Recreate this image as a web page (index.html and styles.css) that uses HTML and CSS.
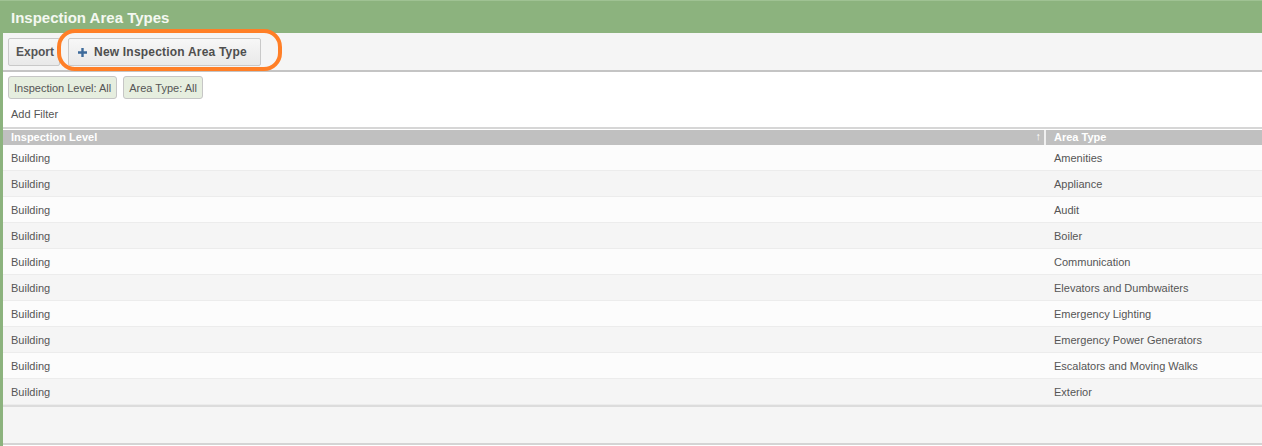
FILE: index.html
```html
<!DOCTYPE html>
<html>
<head>
<meta charset="utf-8">
<link rel="stylesheet" href="styles.css">
</head>
<body>
<div class="page">
  <div class="title">Inspection Area Types</div>
  <div class="toolbar">
    <button class="btn">Export</button>
    <button class="btn btn-new"><svg class="plus" width="11" height="11" viewBox="0 0 11 11"><path d="M5.5 1v9M1 5.5h9" stroke="#3d6a9a" stroke-width="2.4"/></svg>New Inspection Area Type</button>
    <div class="highlight"></div>
  </div>
  <div class="content">
    <div class="filters">
      <span class="chip">Inspection Level: All</span>
      <span class="chip">Area Type: All</span>
    </div>
    <div class="addfilter">Add Filter</div>
    <div class="grid">
      <div class="ghead">
        <div class="c1">Inspection Level<span class="sort">↑</span></div>
        <div class="c2">Area Type</div>
      </div>
      <div class="row"><div class="c1">Building</div><div class="c2">Amenities</div></div>
      <div class="row"><div class="c1">Building</div><div class="c2">Appliance</div></div>
      <div class="row"><div class="c1">Building</div><div class="c2">Audit</div></div>
      <div class="row"><div class="c1">Building</div><div class="c2">Boiler</div></div>
      <div class="row"><div class="c1">Building</div><div class="c2">Communication</div></div>
      <div class="row"><div class="c1">Building</div><div class="c2">Elevators and Dumbwaiters</div></div>
      <div class="row"><div class="c1">Building</div><div class="c2">Emergency Lighting</div></div>
      <div class="row"><div class="c1">Building</div><div class="c2">Emergency Power Generators</div></div>
      <div class="row"><div class="c1">Building</div><div class="c2">Escalators and Moving Walks</div></div>
      <div class="row"><div class="c1">Building</div><div class="c2">Exterior</div></div>
      <div class="gfoot"></div>
    </div>
  </div>
</div>
</body>
</html>
```

FILE: styles.css
```css
* { box-sizing: border-box; }
html, body { margin: 0; padding: 0; }
body {
  font-family: "Liberation Sans", Arial, sans-serif;
  background: #ffffff;
  width: 1262px;
  height: 446px;
  overflow: hidden;
}
.page {
  border-left: 3px solid #8cb37e;
  height: 446px;
  position: relative;
}
.title {
  height: 33px;
  margin-left: -3px;
  background: #8cb37e;
  border-top: 1px solid #9fc293;
  color: #f4f8f1;
  font-weight: bold;
  font-size: 15px;
  padding: 8px 0 0 11px;
}
.toolbar {
  height: 39px;
  background: #f5f5f5;
  border-bottom: 2px solid #c4c4c4;
  display: flex;
  align-items: flex-start;
  gap: 8px;
  padding: 5px 0 0 5px;
  position: relative;
}
.btn {
  height: 28px;
  font-family: "Liberation Sans", Arial, sans-serif;
  font-size: 12px;
  font-weight: bold;
  color: #555555;
  background: linear-gradient(#f7f7f7, #e9e9e9);
  border: 1px solid #c9c9c9;
  border-radius: 2px;
  padding: 0 5px 0 7px;
  display: flex;
  align-items: center;
}
.btn-new {
  width: 193px;
  padding-left: 8px;
  gap: 6px;
  color: #4e4e4e;
  letter-spacing: 0.2px;
}
.plus { flex: none; }
.highlight {
  position: absolute;
  left: 54px;
  top: -4px;
  width: 225px;
  height: 42px;
  border: 4px solid #ff7f27;
  border-radius: 18px / 18px;
}
.content {
  padding-top: 4px;
}
.filters {
  display: flex;
  gap: 6px;
  padding-left: 5px;
}
.chip {
  height: 23px;
  background: #e6eedf;
  border: 1px solid #c6c6c6;
  border-radius: 3px;
  font-size: 11px;
  color: #555555;
  padding: 0 5px;
  display: flex;
  align-items: center;
}
.addfilter {
  font-size: 11px;
  color: #555555;
  padding: 9px 0 0 8px;
  height: 28px;
}
.grid {
  border-top: 2px solid #d6d6d6;
}
.ghead {
  display: flex;
  height: 16px;
  background: #c0c0c0;
  color: #ffffff;
  font-size: 11px;
  font-weight: bold;
  border-top: 1px solid #ffffff;
}
.ghead .c1 {
  position: relative;
  border-right: 2px solid #f0f0f0;
  padding-top: 1px;
}
.ghead .c2 { padding-top: 1px; }
.sort {
  position: absolute;
  right: 3px;
  top: 0;
  font-size: 11px;
  font-weight: bold;
}
.c1 { width: 1043px; padding-left: 8px; }
.c2 { flex: 1; padding-left: 8px; }
.row {
  display: flex;
  height: 26px;
  align-items: center;
  font-size: 11px;
  color: #555555;
  background: #fcfcfc;
  border-bottom: 1px solid #ececec;
}
.row:nth-child(odd) { background: #f5f5f5; }
.gfoot {
  height: 40px;
  background: #f5f5f5;
  border-top: 2px solid #dcdcdc;
  border-bottom: 2px solid #d4d4d4;
}
```
